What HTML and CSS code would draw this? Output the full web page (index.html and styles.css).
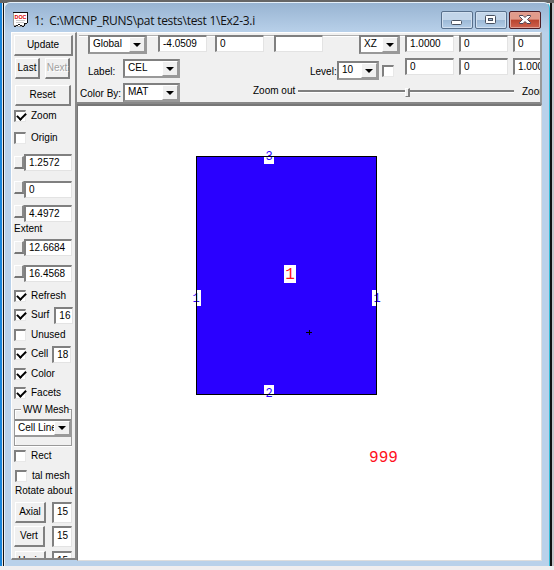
FILE: index.html
```html
<!DOCTYPE html>
<html lang="en">
<head>
<meta charset="utf-8">
<title>1: Ex2-3.i</title>
<link rel="stylesheet" href="styles.css">
</head>
<body>
<div class="window">
  <header class="titlebar">
    <svg class="doc" width="16" height="16" viewBox="0 0 16 16"><path d="M.5.5h14v10l-3 3h-1l-2 1h-3l-2-1h-3z" fill="#fff" stroke="#999"/><path d="M0 .5h15M14.500 0v10.500M14 11.500h-2.500v2.500M11 14.500h-2M9 13.500h-2M7 12.500h-2M5 13.500h-2M3 14.500h-2" fill="none" stroke="#111" shape-rendering="crispEdges"/><text x="1.500" y="6.500" class="doctext" textLength="12" lengthAdjust="spacingAndGlyphs">DOC</text><path d="M3 8.500h9M3 10.500h8" stroke="#ccc"/></svg>
    <div class="title">1:&nbsp; C:\MCNP_RUNS\pat tests\test 1\Ex2-3.i</div>
    <div class="controls">
      <div class="ctl"><svg width="30" height="16"><rect x="9.500" y="8.500" width="10" height="4" rx="1" fill="#fff" stroke="#485160"/></svg></div>
      <div class="ctl"><svg width="30" height="16"><rect x="9.500" y="3.500" width="10" height="8" rx="1" fill="#fff" stroke="#485160"/><rect x="12.500" y="6.500" width="4" height="2" fill="#9fb9d6" stroke="#485160"/></svg></div>
      <div class="ctl close"><svg width="30" height="16"><path d="M9.500 3.500h3.500l2 2 2-2h3.500v1l-3 3 3 3v1h-3.500l-2-2-2 2h-3.500v-1l3-3-3-3z" fill="#fff" stroke="#4e4554"/></svg></div>
    </div>
  </header>
  <div class="content">
    <aside class="sidebar">
      <div class="row"><div class="btn update">Update</div></div>
      <div class="row in"><div class="btn nav">Last</div><div class="btn nav next">Next</div></div>
      <div class="row in"><div class="btn reset">Reset</div></div>
      <div class="row"><i class="check on"></i>Zoom</div>
      <div class="row"><i class="check"></i>Origin</div>
      <div class="row"><i class="thumb"></i><div class="field val">1.2572</div></div>
      <div class="row"><i class="thumb up"></i><div class="field val">0</div></div>
      <div class="row"><i class="thumb up"></i><div class="field val">4.4972</div></div>
      <div class="row">Extent</div>
      <div class="row"><i class="thumb"></i><div class="field val">12.6684</div></div>
      <div class="row"><i class="thumb up"></i><div class="field val">16.4568</div></div>
      <div class="row"><i class="check on"></i>Refresh</div>
      <div class="row"><i class="check on"></i>Surf<div class="field size surf">16</div></div>
      <div class="row"><i class="check"></i>Unused</div>
      <div class="row"><i class="check on"></i>Cell<div class="field size">18</div></div>
      <div class="row"><i class="check on"></i>Color</div>
      <div class="row"><i class="check on"></i>Facets</div>
      <div class="group"><span class="legend">WW Mesh</span><div class="combo mesh"><span>Cell Line</span><b></b></div></div>
      <div class="row"><i class="check"></i>Rect</div>
      <div class="row in"><i class="check"></i>tal mesh</div>
      <div class="row in">Rotate about</div>
      <div class="row in"><div class="btn rot">Axial</div><div class="field deg">15</div></div>
      <div class="row"><div class="btn rot">Vert</div><div class="field deg vert">15</div></div>
      <div class="row in"><div class="btn rot">Horiz</div><div class="field deg">15</div></div>
    </aside>
    <main class="main">
      <section class="toolbar">
        <div class="bar first">
          <div class="combo global"><span>Global</span><b></b></div>
          <div class="field num gap11">-4.0509</div>
          <div class="field num gap8">0</div>
          <div class="field num gap10">&nbsp;</div>
          <div class="combo plane"><span>XZ</span><b></b></div>
          <div class="field num gap5">1.0000</div>
          <div class="field num gap5">0</div>
          <div class="field num gap5">0</div>
        </div>
        <div class="bar second">
          <span class="lab">Label:</span>
          <div class="combo wide"><span>CEL</span><b></b></div>
          <span class="lab level">Level:</span>
          <div class="combo lvl"><span>10</span><b></b></div>
          <i class="check lone"></i>
          <div class="field num lift gap11">0</div>
          <div class="field num lift gap5">0</div>
          <div class="field num lift gap5">1.0000</div>
        </div>
        <div class="bar third">
          <span class="lab by">Color By:</span>
          <div class="combo wide"><span>MAT</span><b></b></div>
          <span class="lab out">Zoom out</span>
          <div class="slider"><i></i></div>
          <span class="lab zin">Zoom in</span>
        </div>
      </section>
      <section class="plot">
        <svg width="463" height="453" viewBox="78 106 463 453">
          <rect x="196.500" y="156.500" width="180" height="238" fill="#2a00ff" stroke="#000" shape-rendering="crispEdges"/>
          <g fill="#fff" shape-rendering="crispEdges"><rect x="264" y="157" width="10" height="7"/><rect x="264" y="385" width="10" height="9"/><rect x="197" y="290" width="4" height="16"/><rect x="372" y="290" width="4" height="16"/><rect x="284" y="265" width="12" height="18"/></g>
          <g class="surface"><text x="269" y="160">3</text><text x="269" y="397">2</text><text x="196" y="302">1</text><text x="377" y="302">1</text></g>
          <g class="cell"><text x="290" y="279">1</text><text x="383.500" y="462">999</text></g>
          <path d="M196.500 290v16M376.500 290v16M264 156.500h10M264 394.500h10M306 332.500h6M309.500 330v5" stroke="#000" fill="none" shape-rendering="crispEdges"/>
        </svg>
      </section>
    </main>
  </div>
</div>
</body>
</html>
```
FILE: styles.css
```css
* { box-sizing: border-box; }
body {
  margin: 0;
  width: 554px;
  height: 570px;
  overflow: hidden;
  background: linear-gradient(90deg, #1683d9 2px, #e8e8e8 2px, #e8e8e8 3px, #111 3px, #111 4px, transparent 4px, transparent 550px, #111 550px, #111 552px, #c5c5ca 552px) 0 3px / 554px 563px no-repeat, linear-gradient(#666 3px, #f0eeef 3px);
  font: 10px/12px "Liberation Sans", Arial, sans-serif;
  color: #000;
}
i { font-style: normal; }
.window {
  width: 546px;
  height: 564px;
  margin: 2px 0 0 4px;
  padding: 0 7px 0 6px;
  border: 1px solid #e5f0fa;
  border-right-color: #35bcd6;
  border-bottom: 0;
  border-radius: 6px 6px 0 0;
  background: linear-gradient(#98b4d2, #b9d1ea 30px);
}
.titlebar { height: 29px; display: flex; align-items: center; padding-left: 2px; }
.doc { margin-top: 5px; }
.doctext { font: bold 6px "Liberation Sans", sans-serif; fill: #d00; }
.title {
  margin: 6px 0 0 5px;
  font: 12px/16px "Open Sans", sans-serif;
  letter-spacing: -0.27px;
  color: #111;
  white-space: pre;
}
.controls { display: flex; gap: 2px; margin: 5px 1px 0 auto; }
.ctl {
  width: 32px;
  height: 18px;
  border: 1px solid #58708c;
  border-radius: 2px;
  box-shadow: inset 0 0 0 1px #d1e0f0;
  background: linear-gradient(#c2d5e9 50%, #9bb8d5 50%, #b4cee8);
}
.ctl svg { display: block; }
.close {
  border-color: #4e1c24;
  box-shadow: inset 0 0 0 1px #e0a094;
  background: linear-gradient(#e19b8b 45%, #b9432d 50%, #cf6250);
}
.content { display: flex; width: 531px; height: 529px; }
.sidebar {
  width: 66px;
  height: 528px;
  padding-left: 2px;
  overflow: hidden;
  display: grid;
  grid-template-rows: 24px 22px 32px 10px 34px 15px 39px 9px 22px 15px 37px 8px 30px 10px 28px 12px 26px 40px 20px 20px 10px 33px 15px 34px;
  background: #f0f0f0;
  border: 1px solid #fff;
  border-right: 2px solid #888;
  border-bottom: 2px solid #858585;
}
.row { display: flex; align-items: center; white-space: nowrap; min-height: 0; }
.in { padding-left: 1px; }
.btn {
  flex: none;
  height: 21px;
  display: grid;
  place-items: center;
  background: #f0f0f0;
  border: 1px solid #fff;
  border-right: 2px solid #808080;
  border-bottom: 2px solid #808080;
}
.update { width: 59px; }
.nav { width: 25px; margin-right: 5px; }
.next { color: #a0a0a0; text-shadow: 1px 1px #fff; }
.reset { width: 56px; }
.rot { width: 31px; }
.check {
  flex: none;
  width: 12px;
  height: 12px;
  margin-right: 5px;
  background: #fff;
  border: 1px solid #e8e8e8;
  border-top: 2px solid #808080;
  border-left: 2px solid #808080;
}
.on::before {
  content: "";
  display: block;
  width: 7px;
  height: 4px;
  margin: 1px 0 0 1px;
  border: solid #000;
  border-width: 0 0 2px 2px;
  transform: translateY(-0.5px) rotate(-45deg);
}
.field {
  flex: none;
  height: 17px;
  overflow: hidden;
  background: #fff;
  border: 1px solid #e3e3e3;
  border-top: 2px solid #808080;
  border-left: 2px solid #808080;
  line-height: 13px;
  white-space: nowrap;
}
.val { width: 48px; padding-left: 3px; }
.thumb {
  width: 10px;
  height: 13px;
  border: 1px solid #fff;
  border-right: 2px solid #888;
  border-bottom: 2px solid #777;
}
.up { transform: translateY(-2px); }
.size { width: 19px; padding-left: 3px; margin-left: 4px; line-height: 14px; }
.surf { margin-left: 5px; }
.deg { width: 20px; height: 21px; padding-left: 3px; margin-left: 6px; line-height: 15px; }
.vert { margin-left: 7px; }
.group {
  width: 58px;
  height: 37px;
  margin-top: 3px;
  border: 1px solid #999;
  box-shadow: inset 1px 1px #fff, 0 1px #fff;
}
.legend { display: block; width: 47px; height: 10px; line-height: 10px; margin: -5px 0 0 6px; padding-left: 2px; background: #f0f0f0; white-space: nowrap; }
.combo {
  flex: none;
  height: 19px;
  display: flex;
  background: #fff;
  border: 2px solid #808080;
  border-right-color: #999;
  border-bottom-color: #999;
}
.combo span { flex: 1; min-width: 0; padding-left: 3px; line-height: 13px; overflow: hidden; white-space: nowrap; }
.combo b {
  flex: none;
  width: 16px;
  display: grid;
  place-items: center;
  background: #f0f0f0;
  border: 1px solid #fff;
  border-right-color: #999;
  border-bottom-color: #999;
}
.combo b::before { content: ""; border: 4px solid transparent; border-top-color: #000; border-bottom: 0; }
.mesh { width: 56px; margin-top: 4px; height: 18px; border-left-width: 0; border-right-width: 1px; }
.main { width: 465px; display: flex; flex-direction: column; }
.toolbar {
  height: 72px;
  overflow: hidden;
  background: #f0f0f0;
  border-top: 1px solid #fff;
  border-right: 2px solid #999;
  border-bottom: 2px solid #888;
  padding: 2px 0 0 2px;
}
.bar { display: flex; height: 24px; align-items: flex-start; }
.first { border-top: 1px solid #b0b0b0; box-shadow: inset 0 1px #fff; }
.first > * { margin-top: -1px; }
.global { width: 59px; margin-left: 9px; }
.num { width: 49px; padding-left: 3px; }
.gap5 { margin-left: 5px; }
.gap8 { margin-left: 8px; }
.gap10 { margin-left: 10px; }
.gap11 { margin-left: 11px; }
.plane { width: 41px; margin-left: 36px; }
.lab { flex: none; white-space: nowrap; }
.second .lab { width: 35px; margin: 7px 0 0 9px; }
.wide { width: 57px; }
.second .level { width: 27px; margin-left: 130px; }
.lvl { width: 42px; margin-top: 2px; }
.lone { margin: 6px 0 0 3px; }
.lift { margin-top: -1px; }
.third .by { width: 43px; margin: 5px 0 0 1px; }
.third .out { width: 45px; margin: 2px 0 0 73px; }
.slider { flex: none; width: 216px; height: 3px; margin-top: 7px; border-top: 2px solid #808080; border-bottom: 1px solid #fff; }
.slider i {
  display: block;
  width: 5px;
  height: 9px;
  margin-left: 107px;
  transform: translateY(-4px);
  background: #f0f0f0;
  border: 1px solid #fff;
  border-right: 2px solid #808080;
  border-bottom: 1px solid #808080;
}
.third .zin { margin: 3px 0 0 8px; }
.plot {
  height: 457px;
  background: #fff;
  border-top: 2px solid #777;
  border-left: 1px solid #777;
  border-right: 1px solid #ddd;
  border-bottom: 1px solid #ddd;
}
.plot svg { display: block; }
.surface { font: 12px "Liberation Mono", monospace; fill: #2a00ff; text-anchor: middle; }
.cell { font: 16px "Liberation Mono", monospace; fill: #ff1020; text-anchor: middle; }
```
